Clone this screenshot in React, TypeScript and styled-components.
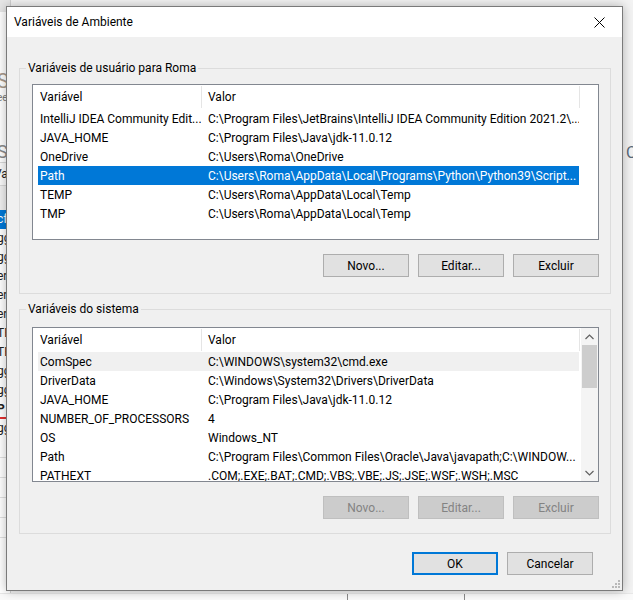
import styled, { createGlobalStyle, css } from 'styled-components';

// Windows 10 "Variáveis de Ambiente" dialog

const GlobalStyle = createGlobalStyle`
  html, body {
    margin: 0;
    padding: 0;
    background: #f0f0f0;
  }
  body {
    font-family: Roboto, "Noto Sans", sans-serif;
    font-size: 12px;
    color: #000;
  }
`;

const Desktop = styled.div`
  position: relative;
  width: 633px;
  height: 600px;
  overflow: hidden;
  background: #f3f3f3;
`;

// the window sitting behind the dialog, only its edges show
const BackWindow = styled.div`
  position: absolute;
  left: -60px;
  top: 0;
  width: 70px;
  height: 600px;
  background: #ffffff;
  border-right: 1px solid #d0d0d0;
`;

const BackTop = styled.div`
  height: 12px;
  background: #e6e6e6;
`;

const BackHeading = styled.div`
  margin-top: 58px;
  padding-left: 57px;
  font-size: 20px;
  line-height: 22px;
  color: #a89a8c;
`;

const BackSmall = styled.div`
  padding-left: 57px;
  font-size: 10px;
  color: #7a7a7a;
`;

const BackSection = styled.div`
  margin-top: 38px;
  padding-left: 57px;
  font-size: 18px;
  color: #8a8a8a;
  border-bottom: 1px solid #d8d8d8;
`;

const BackLabel = styled.div`
  padding-left: 54px;
  height: 22px;
  line-height: 22px;
  font-size: 12px;
  color: #222;
  border-bottom: 1px solid #d8d8d8;
  background: #fafafa;
`;

const BackGap = styled.div`
  height: 24px;
  background: #f0f0f0;
`;

const BackItem = styled.div<{ $active?: boolean; $mark?: boolean }>`
  height: 19px;
  line-height: 19px;
  padding-left: 57px;
  font-size: 12px;
  white-space: nowrap;
  color: #222;
  ${p => p.$active && css`
    background: #0078d7;
    color: #fff;
  `}
  ${p => p.$mark && css`
    font-weight: bold;
    border-bottom: 2px solid #e03030;
    height: 17px;
  `}
`;

const BackLine = styled.div`
  height: 19px;
  border-bottom: 1px solid #e0e0e0;
`;

const SideText = styled.div`
  position: absolute;
  left: 626px;
  top: 143px;
  font-size: 16px;
  color: #5a6a7a;
`;

const BottomStrip = styled.div`
  position: absolute;
  left: 0;
  top: 593px;
  width: 633px;
  height: 7px;
  background: #fafafa;
  border-top: 1px solid #e8e8e8;
`;

const StripMark = styled.div<{ $x: number }>`
  position: absolute;
  top: 0;
  left: ${p => p.$x}px;
  width: 1px;
  height: 7px;
  background: #8a8a8a;
`;

const Dialog = styled.div`
  position: absolute;
  left: 6px;
  top: 6px;
  width: 615px;
  height: 583px;
  border: 1px solid #7a7a7a;
  background: #f0f0f0;
  box-shadow: 0 0 10px rgba(0, 0, 0, 0.28);
  display: flex;
  flex-direction: column;
`;

const TitleBar = styled.div`
  height: 30px;
  background: #ffffff;
  display: flex;
  align-items: center;
  justify-content: space-between;
  padding-left: 7px;
  flex-shrink: 0;
`;

const Title = styled.span`
  font-size: 12px;
  color: #000;
`;

const CloseButton = styled.div`
  width: 46px;
  height: 30px;
  display: flex;
  align-items: center;
  justify-content: center;
`;

const Body = styled.div`
  flex: 1;
  display: flex;
  flex-direction: column;
  padding: 23px 11px 0 12px;
  position: relative;
`;

const Group = styled.fieldset<{ $gap?: number }>`
  margin: ${p => p.$gap ?? 0}px 0 0;
  padding: 0;
  border: 1px solid #dcdcdc;
  min-width: 0;
`;

const Legend = styled.legend`
  margin-left: 6px;
  padding: 0 2px;
  font-size: 12px;
  line-height: 16px;
  height: 16px;
  color: #000;
`;

const GroupInner = styled.div<{ $top: number; $bottom: number }>`
  padding: ${p => p.$top}px 11px ${p => p.$bottom}px 12px;
  display: flex;
  flex-direction: column;
`;

const ListBox = styled.div<{ $height: number }>`
  height: ${p => p.$height}px;
  box-sizing: border-box;
  border: 1px solid #828790;
  background: #ffffff;
  overflow: hidden;
  display: flex;
`;

const ListContent = styled.div`
  flex: 1;
  min-width: 0;
  overflow: hidden;
`;

const HeaderRow = styled.div`
  display: flex;
  height: 24px;
  width: 547px;
`;

const HeaderCell = styled.div<{ $width: number; $pad: number }>`
  width: ${p => p.$width}px;
  padding-left: ${p => p.$pad}px;
  box-sizing: border-box;
  display: flex;
  align-items: center;
  border-right: 1px solid #e5e5e5;
  margin: 1px 0 1px;
  color: #000;
`;

const Row = styled.div<{ $selected?: boolean; $soft?: boolean }>`
  display: flex;
  height: 19px;
  align-items: center;
  width: 541px;
  margin-left: 5px;
  white-space: nowrap;
  color: #000;
  ${p => p.$soft && css`
    background: #f0f0f0;
  `}
  ${p => p.$selected && css`
    background: #0078d7;
    color: #ffffff;
  `}
`;

const NameCell = styled.div`
  width: 163px;
  padding-left: 2px;
  box-sizing: border-box;
  overflow: hidden;
`;

const ValueCell = styled.div`
  flex: 1;
  padding-left: 7px;
  overflow: hidden;
`;

const ScrollBar = styled.div`
  width: 17px;
  flex-shrink: 0;
  background: #f4f4f4;
  display: flex;
  flex-direction: column;
  align-items: center;
`;

const ScrollArrow = styled.div`
  height: 17px;
  width: 17px;
  display: flex;
  align-items: center;
  justify-content: center;
`;

const ScrollThumb = styled.div`
  width: 15px;
  height: 43px;
  background: #cdcdcd;
`;

const ScrollTrack = styled.div`
  flex: 1;
`;

const ButtonRow = styled.div<{ $top: number }>`
  display: flex;
  justify-content: flex-end;
  gap: 9px;
  margin-top: ${p => p.$top}px;
`;

const Button = styled.div<{ $disabled?: boolean; $default?: boolean }>`
  width: 86px;
  height: 23px;
  box-sizing: border-box;
  display: flex;
  align-items: center;
  justify-content: center;
  background: #e1e1e1;
  border: 1px solid #adadad;
  color: #000;
  font-size: 12px;
  ${p => p.$disabled && css`
    background: #cccccc;
    border-color: #bfbfbf;
    color: #838383;
  `}
  ${p => p.$default && css`
    border: 2px solid #0078d7;
  `}
`;

const Footer = styled.div`
  display: flex;
  justify-content: flex-end;
  gap: 9px;
  margin-top: 18px;
  padding-right: 18px;
`;

const Grip = styled.div`
  position: absolute;
  right: 2px;
  bottom: 2px;
  line-height: 0;
`;

const userVars = [
  { name: 'IntelliJ IDEA Community Edit...', value: 'C:\\Program Files\\JetBrains\\IntelliJ IDEA Community Edition 2021.2\\...' },
  { name: 'JAVA_HOME', value: 'C:\\Program Files\\Java\\jdk-11.0.12' },
  { name: 'OneDrive', value: 'C:\\Users\\Roma\\OneDrive' },
  { name: 'Path', value: 'C:\\Users\\Roma\\AppData\\Local\\Programs\\Python\\Python39\\Script...', selected: true },
  { name: 'TEMP', value: 'C:\\Users\\Roma\\AppData\\Local\\Temp' },
  { name: 'TMP', value: 'C:\\Users\\Roma\\AppData\\Local\\Temp' },
];

const systemVars = [
  { name: 'ComSpec', value: 'C:\\WINDOWS\\system32\\cmd.exe', soft: true },
  { name: 'DriverData', value: 'C:\\Windows\\System32\\Drivers\\DriverData' },
  { name: 'JAVA_HOME', value: 'C:\\Program Files\\Java\\jdk-11.0.12' },
  { name: 'NUMBER_OF_PROCESSORS', value: '4' },
  { name: 'OS', value: 'Windows_NT' },
  { name: 'Path', value: 'C:\\Program Files\\Common Files\\Oracle\\Java\\javapath;C:\\WINDOW...' },
  { name: 'PATHEXT', value: '.COM;.EXE;.BAT;.CMD;.VBS;.VBE;.JS;.JSE;.WSF;.WSH;.MSC' },
];

const backItems = ['cfg', 'gg', 'gg', 'ern', 'ern', 'ern', 'TEM', 'TEM', 'gg', 'gg', 'P', 'gg'];

type Var = { name: string; value: string; selected?: boolean; soft?: boolean };

function Header() {
  return (
    <HeaderRow>
      <HeaderCell $width={169} $pad={7}>Variável</HeaderCell>
      <HeaderCell $width={378} $pad={6}>Valor</HeaderCell>
    </HeaderRow>
  );
}

function Rows({ items }: { items: Var[] }) {
  return (
    <>
      {items.map((v, i) => (
        <Row key={i} $selected={v.selected} $soft={v.soft}>
          <NameCell>{v.name}</NameCell>
          <ValueCell>{v.value}</ValueCell>
        </Row>
      ))}
    </>
  );
}

function App() {
  return (
    <>
      <GlobalStyle />
      <Desktop>
        <BackWindow>
          <BackTop />
          <BackHeading>Sp</BackHeading>
          <BackSmall>ee</BackSmall>
          <BackSection>Se</BackSection>
          <BackLabel>Var</BackLabel>
          <BackGap />
          {backItems.map((t, i) => (
            <BackItem key={i} $active={i === 0} $mark={t === 'P'}>{t}</BackItem>
          ))}
          <BackLine />
          <BackLine />
          <BackLine />
          <BackLine />
          <BackLine />
        </BackWindow>
        <SideText>C</SideText>
        <BottomStrip>
          <StripMark $x={347} />
          <StripMark $x={464} />
        </BottomStrip>

        <Dialog>
          <TitleBar>
            <Title>Variáveis de Ambiente</Title>
            <CloseButton>
              <svg width="11" height="11" viewBox="0 0 11 11">
                <path d="M0.5 0.5 L10.5 10.5 M10.5 0.5 L0.5 10.5" stroke="#000" strokeWidth="1" />
              </svg>
            </CloseButton>
          </TitleBar>
          <Body>
            <Group>
              <Legend>Variáveis de usuário para Roma</Legend>
              <GroupInner $top={8} $bottom={16}>
                <ListBox $height={156}>
                  <ListContent>
                    <Header />
                    <Rows items={userVars} />
                  </ListContent>
                </ListBox>
                <ButtonRow $top={14}>
                  <Button>Novo...</Button>
                  <Button>Editar...</Button>
                  <Button>Excluir</Button>
                </ButtonRow>
              </GroupInner>
            </Group>
            <Group $gap={7}>
              <Legend>Variáveis do sistema</Legend>
              <GroupInner $top={10} $bottom={14}>
                <ListBox $height={155}>
                  <ListContent>
                    <Header />
                    <Rows items={systemVars} />
                  </ListContent>
                  <ScrollBar>
                    <ScrollArrow>
                      <svg width="9" height="6" viewBox="0 0 9 6">
                        <path d="M0.5 5 L4.5 1 L8.5 5" stroke="#606060" strokeWidth="1.2" fill="none" />
                      </svg>
                    </ScrollArrow>
                    <ScrollThumb />
                    <ScrollTrack />
                    <ScrollArrow>
                      <svg width="9" height="6" viewBox="0 0 9 6">
                        <path d="M0.5 1 L4.5 5 L8.5 1" stroke="#606060" strokeWidth="1.2" fill="none" />
                      </svg>
                    </ScrollArrow>
                  </ScrollBar>
                </ListBox>
                <ButtonRow $top={14}>
                  <Button $disabled>Novo...</Button>
                  <Button $disabled>Editar...</Button>
                  <Button $disabled>Excluir</Button>
                </ButtonRow>
              </GroupInner>
            </Group>
            <Footer>
              <Button $default>OK</Button>
              <Button>Cancelar</Button>
            </Footer>
            <Grip>
              <svg width="8" height="8" viewBox="0 0 8 8">
                <rect x="6" y="0" width="2" height="2" fill="#b8b8b8" />
                <rect x="3" y="3" width="2" height="2" fill="#b8b8b8" />
                <rect x="6" y="3" width="2" height="2" fill="#b8b8b8" />
                <rect x="0" y="6" width="2" height="2" fill="#b8b8b8" />
                <rect x="3" y="6" width="2" height="2" fill="#b8b8b8" />
                <rect x="6" y="6" width="2" height="2" fill="#b8b8b8" />
              </svg>
            </Grip>
          </Body>
        </Dialog>
      </Desktop>
    </>
  );
}

export default App;
